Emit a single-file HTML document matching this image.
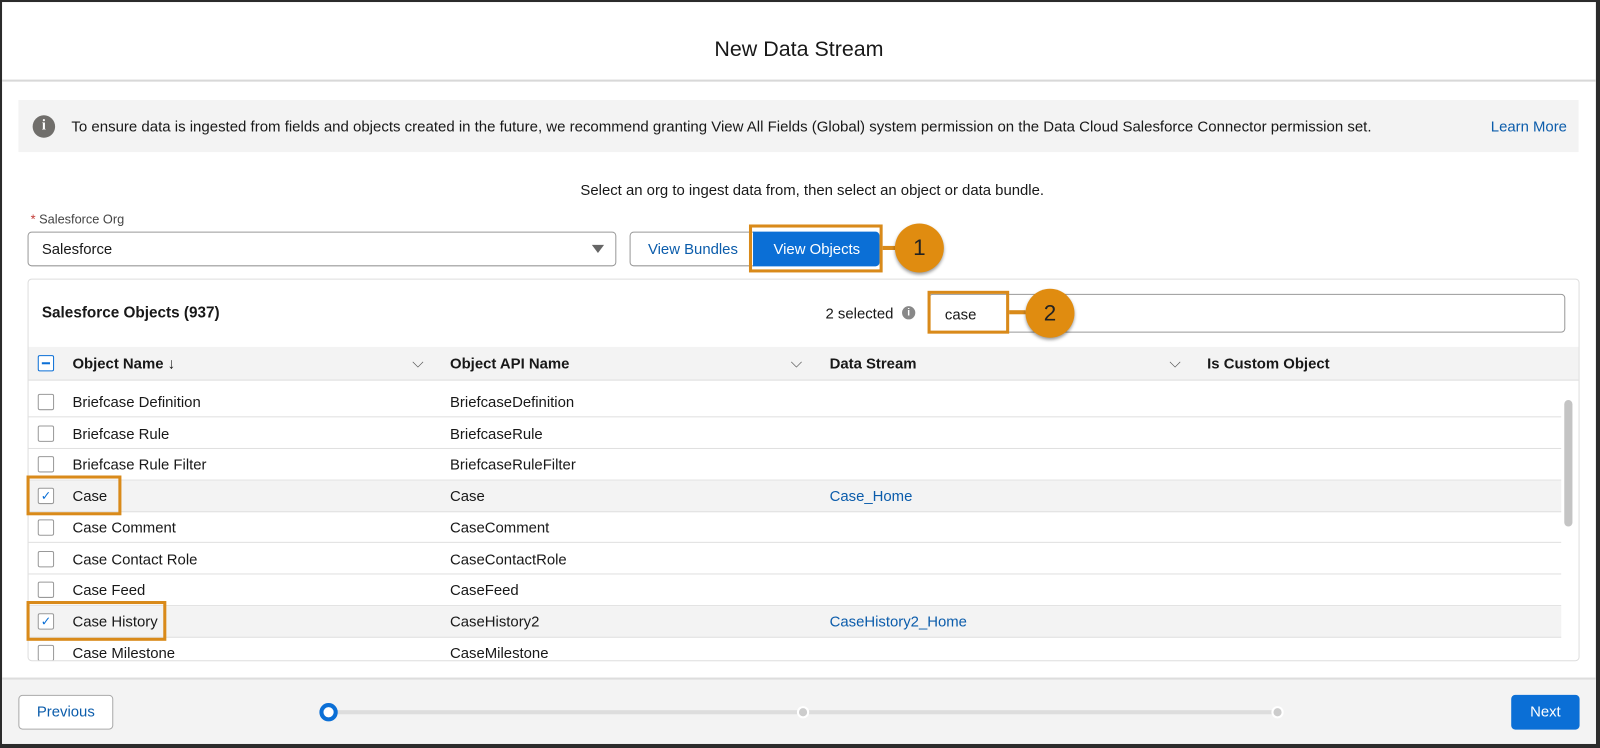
<!DOCTYPE html>
<html><head><style>
*{box-sizing:border-box;margin:0;padding:0}
body{width:1600px;height:748px;background:#2b2b2b;font-family:"Liberation Sans",sans-serif;color:#181818;position:relative;overflow:hidden}
#w{position:absolute;left:0;top:0;width:1568px;height:733px;transform:scale(1.0204);transform-origin:0 0}
.page{position:absolute;left:2px;top:2px;width:1562px;height:727px;background:#fff}
.a{position:absolute}
.t{font-size:14.6px;white-space:nowrap;margin-top:1px}
.cb{position:absolute;width:16px;height:16px;border:1px solid #999;border-radius:2px;background:#fff}
.row{position:absolute;left:28px;width:1502px;height:31px;border-bottom:1px solid #e0e0e0}
.ora{position:absolute;border:3px solid #d98a1a;}
.circ{position:absolute;width:48px;height:48px;border-radius:50%;background:#e08c10;color:#222;font-size:22px;text-align:center;line-height:48px;box-shadow:0 2px 3px rgba(0,0,0,.4)}
</style></head><body><div id="w">
<div class="page"></div>
<div class="a t" style="left:0;width:1566px;top:36px;text-align:center;font-size:21px">New Data Stream</div>
<div class="a" style="left:2px;top:78px;width:1562px;height:2px;background:#d8d8d8"></div>
<div class="a" style="left:18px;top:98px;width:1529px;height:51px;background:#f3f3f3"></div>
<div class="a" style="left:32px;top:113px;width:22px;height:22px;border-radius:50%;background:#706e6b;color:#fff;font-size:14px;font-weight:bold;text-align:center;line-height:22px;font-family:'Liberation Serif',serif">i</div>
<div class="a t" style="left:70px;top:116px;font-size:14.7px">To ensure data is ingested from fields and objects created in the future, we recommend granting View All Fields (Global) system permission on the Data Cloud Salesforce Connector permission set.</div>
<div class="a t" style="left:1461px;top:116px;color:#0b5cab">Learn More</div>
<div class="a t" style="left:0;width:1592px;top:178px;text-align:center">Select an org to ingest data from, then select an object or data bundle.</div>
<div class="a t" style="left:30px;top:207px;font-size:12.5px;color:#444"><span style="color:#c23934">*</span> Salesforce Org</div>
<div class="a" style="left:27px;top:227px;width:577px;height:34px;border:1px solid #999;border-radius:4px"></div>
<div class="a t" style="left:41px;top:236px">Salesforce</div>
<div class="a" style="left:580px;top:240px;border-left:6px solid transparent;border-right:6px solid transparent;border-top:8px solid #666"></div>
<div class="a" style="left:617px;top:227px;width:122px;height:34px;border:1px solid #999;border-radius:4px 0 0 4px"></div>
<div class="a t" style="left:635px;top:236px;color:#0b5cab">View Bundles</div>
<div class="a" style="left:738px;top:227px;width:124px;height:34px;background:#0b6fd6;border-radius:0 4px 4px 0"></div>
<div class="a t" style="left:758px;top:236px;color:#fff">View Objects</div>
<div class="ora" style="left:734px;top:220px;width:131px;height:47px"></div>
<div class="a" style="left:865px;top:241px;width:14px;height:4px;background:#d98a1a"></div>
<div class="circ" style="left:877px;top:219px">1</div>
<div class="a" style="left:27px;top:273px;width:1521px;height:375px;border:1px solid #ddd;border-radius:4px"></div>
<div class="a t" style="left:41px;top:297px;font-size:15px;font-weight:bold">Salesforce Objects (937)</div>
<div class="a t" style="left:809px;top:299px">2 selected</div>
<div class="a" style="left:884px;top:300px;width:13px;height:13px;border-radius:50%;background:#888;color:#fff;font-size:10px;font-weight:bold;text-align:center;line-height:13px">i</div>
<div class="a" style="left:910px;top:288px;width:624px;height:38px;border:1px solid #999;border-radius:4px"></div>
<div class="a t" style="left:926px;top:300px">case</div>
<div class="ora" style="left:909px;top:285px;width:80px;height:42px"></div>
<div class="a" style="left:989px;top:304px;width:16px;height:4px;background:#d98a1a"></div>
<div class="circ" style="left:1005px;top:283px">2</div>
<div class="a" style="left:28px;top:340px;width:1519px;height:33px;background:#f3f3f3;border-bottom:1px solid #ddd"></div>
<div class="cb" style="left:37px;top:348px;border-color:#0b6fd6"><div style="position:absolute;left:3px;top:6px;width:8px;height:2px;background:#0b6fd6"></div></div>
<div class="a t" style="left:71px;top:348px;font-weight:bold">Object Name ↓</div>
<div class="a t" style="left:404px;top:347px;color:#555">⌵</div>
<div class="a t" style="left:441px;top:348px;font-weight:bold">Object API Name</div>
<div class="a t" style="left:775px;top:347px;color:#555">⌵</div>
<div class="a t" style="left:813px;top:348px;font-weight:bold">Data Stream</div>
<div class="a t" style="left:1146px;top:347px;color:#555">⌵</div>
<div class="a t" style="left:1183px;top:348px;font-weight:bold">Is Custom Object</div>

<div class="row" style="top:378px"></div><div class="cb" style="left:37px;top:386px"></div><div class="a t" style="left:71px;top:386px">Briefcase Definition</div><div class="a t" style="left:441px;top:386px">BriefcaseDefinition</div>
<div class="row" style="top:409px"></div><div class="cb" style="left:37px;top:417px"></div><div class="a t" style="left:71px;top:417px">Briefcase Rule</div><div class="a t" style="left:441px;top:417px">BriefcaseRule</div>
<div class="row" style="top:440px"></div><div class="cb" style="left:37px;top:447px"></div><div class="a t" style="left:71px;top:447px">Briefcase Rule Filter</div><div class="a t" style="left:441px;top:447px">BriefcaseRuleFilter</div>
<div class="row" style="top:471px;background:#f3f3f3"></div><div class="cb" style="left:37px;top:478px;color:#0b6fd6;font-size:12px;line-height:14px;text-align:center">✓</div><div class="a t" style="left:71px;top:478px">Case</div><div class="a t" style="left:441px;top:478px">Case</div><div class="a t" style="left:813px;top:478px;color:#0b5cab">Case_Home</div>
<div class="ora" style="left:26px;top:466px;width:93px;height:39px"></div>
<div class="row" style="top:501px"></div><div class="cb" style="left:37px;top:509px"></div><div class="a t" style="left:71px;top:509px">Case Comment</div><div class="a t" style="left:441px;top:509px">CaseComment</div>
<div class="row" style="top:532px"></div><div class="cb" style="left:37px;top:540px"></div><div class="a t" style="left:71px;top:540px">Case Contact Role</div><div class="a t" style="left:441px;top:540px">CaseContactRole</div>
<div class="row" style="top:563px"></div><div class="cb" style="left:37px;top:570px"></div><div class="a t" style="left:71px;top:570px">Case Feed</div><div class="a t" style="left:441px;top:570px">CaseFeed</div>
<div class="row" style="top:594px;background:#f3f3f3"></div><div class="cb" style="left:37px;top:601px;color:#0b6fd6;font-size:12px;line-height:14px;text-align:center">✓</div><div class="a t" style="left:71px;top:601px">Case History</div><div class="a t" style="left:441px;top:601px">CaseHistory2</div><div class="a t" style="left:813px;top:601px;color:#0b5cab">CaseHistory2_Home</div>
<div class="ora" style="left:26px;top:589px;width:137px;height:39px"></div>
<div class="a" style="left:28px;top:625px;width:1502px;height:22px;overflow:hidden"><div class="cb" style="left:9px;top:7px"></div><div class="a t" style="left:43px;top:7px">Case Milestone</div><div class="a t" style="left:413px;top:7px">CaseMilestone</div></div>
<div class="a" style="left:1533px;top:392px;width:8px;height:124px;background:#c4c4c4;border-radius:4px"></div>

<div class="a" style="left:2px;top:664px;width:1562px;height:65px;background:#f3f3f3;border-top:2px solid #ddd"></div>
<div class="a" style="left:18px;top:681px;width:93px;height:34px;background:#fff;border:1px solid #aaa;border-radius:4px;color:#0b5cab;font-size:14.6px;text-align:center;line-height:32px">Previous</div>
<div class="a" style="left:322px;top:696px;width:930px;height:4px;background:#ddd"></div>
<div class="a" style="left:313px;top:689px;width:18px;height:18px;border-radius:50%;background:#fff;border:4px solid #0b6fd6"></div>
<div class="a" style="left:781px;top:692px;width:12px;height:12px;border-radius:50%;background:#ccc;border:2px solid #fff"></div>
<div class="a" style="left:1246px;top:692px;width:12px;height:12px;border-radius:50%;background:#ccc;border:2px solid #fff"></div>
<div class="a" style="left:1481px;top:681px;width:67px;height:34px;background:#0b6fd6;border-radius:4px;color:#fff;font-size:14.6px;text-align:center;line-height:34px">Next</div>
</div></body></html>
